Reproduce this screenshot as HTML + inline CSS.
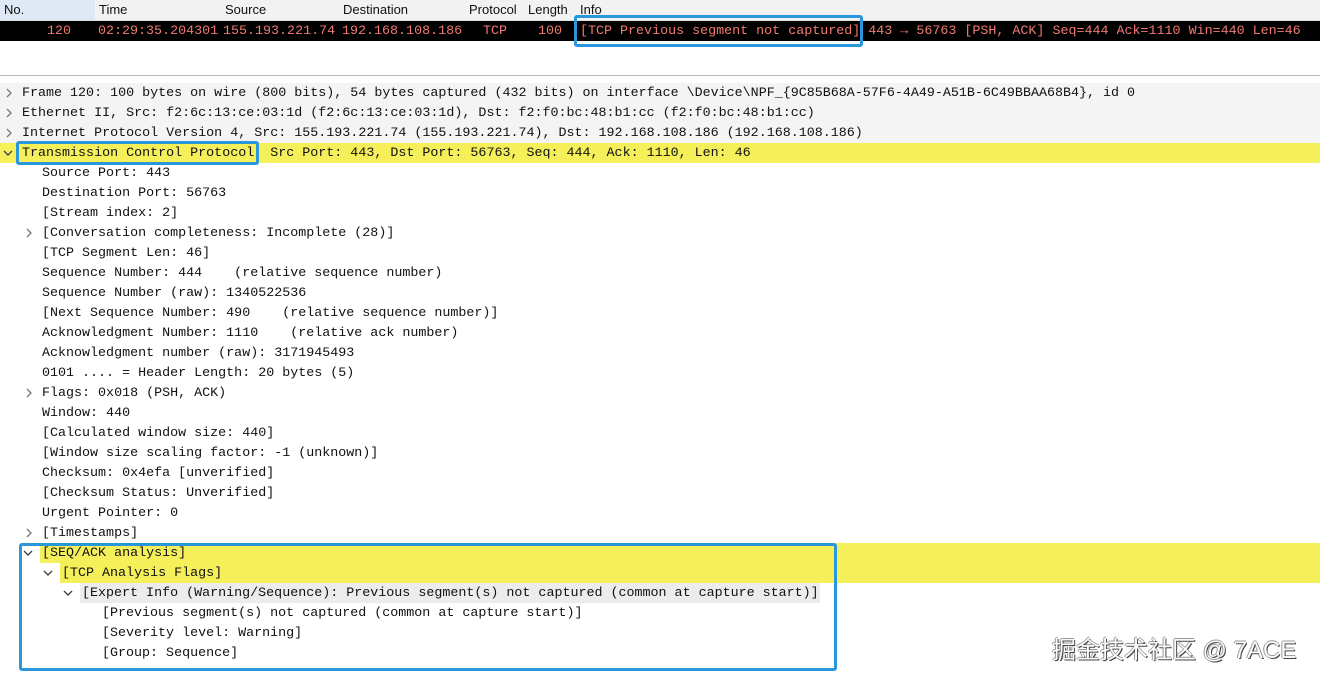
<!DOCTYPE html>
<html><head><style>
body{margin:0;width:1320px;height:680px;background:#fff;position:relative;overflow:hidden;font-family:"Liberation Mono",monospace;font-size:13.35px;color:#111}
.hdr{position:absolute;left:0;top:0;width:1320px;height:20px;background:#f2f2f2;border-bottom:1px solid #ddd;font-family:"Liberation Sans",sans-serif;font-size:13px}
.hdr span{position:absolute;top:2px}
.pk{position:absolute;left:0;top:21px;width:1320px;height:20px;background:#000;color:#f07a72}
.pk span{position:absolute;top:3px;white-space:pre}
.sep{position:absolute;left:0;top:75px;width:1320px;height:1px;background:#bbb}
.r{position:absolute;height:20px;line-height:22px;white-space:pre}
.bg{position:absolute;height:20px}
svg.a{position:absolute;width:10px;height:10px}
.box{position:absolute;border:3px solid #2a97dc;border-radius:3px;box-sizing:border-box}
.wm{position:absolute;left:1052px;top:630px;font-family:"Liberation Sans","Noto Sans CJK SC",sans-serif;font-size:24px;color:#fafafa;text-shadow:1px 1px 0 #444,-1px 0 0 #999,0 -1px 0 #999}
</style></head><body>
<div class="hdr"><span style="left:0;top:0;width:95px;height:20px;background:#dfe9f5"></span><span style="left:4px">No.</span><span style="left:99px">Time</span><span style="left:225px">Source</span><span style="left:343px">Destination</span><span style="left:469px">Protocol</span><span style="left:528px">Length</span><span style="left:580px">Info</span></div>
<div class="pk"><span style="left:47px">120</span><span style="left:98px">02:29:35.204301</span><span style="left:223px">155.193.221.74</span><span style="left:342px">192.168.108.186</span><span style="left:483px">TCP</span><span style="left:538px">100</span><span style="left:580px">[TCP Previous segment not captured] 443 → 56763 [PSH, ACK] Seq=444 Ack=1110 Win=440 Len=46</span></div>
<div class="sep"></div>
<div class="bg" style="left:0;top:83px;width:1320px;background:#f4f4f4"></div>
<div class="bg" style="left:0;top:103px;width:1320px;background:#f4f4f4"></div>
<div class="bg" style="left:0;top:123px;width:1320px;background:#f4f4f4"></div>
<div class="bg" style="left:0;top:143px;width:1320px;background:#f5f05a"></div>
<div class="bg" style="left:40px;top:543px;width:1280px;background:#f5f05a"></div>
<div class="bg" style="left:60px;top:563px;width:1260px;background:#f5f05a"></div>
<div class="bg" style="left:80px;top:583px;width:740px;background:#ececec"></div>
<svg width="0" height="0" style="position:absolute"><defs><polyline id="c" points="3,1 7,5 3,9" fill="none" stroke="#777" stroke-width="1.3"/><polyline id="d" points="1,3 5,7 9,3" fill="none" stroke="#444" stroke-width="1.4"/></defs></svg>
<svg class="a" style="left:4px;top:88px"><use href="#c"/></svg><div class="r" style="left:22px;top:83px">Frame 120: 100 bytes on wire (800 bits), 54 bytes captured (432 bits) on interface \Device\NPF_{9C85B68A-57F6-4A49-A51B-6C49BBAA68B4}, id 0</div>
<svg class="a" style="left:4px;top:108px"><use href="#c"/></svg><div class="r" style="left:22px;top:103px">Ethernet II, Src: f2:6c:13:ce:03:1d (f2:6c:13:ce:03:1d), Dst: f2:f0:bc:48:b1:cc (f2:f0:bc:48:b1:cc)</div>
<svg class="a" style="left:4px;top:128px"><use href="#c"/></svg><div class="r" style="left:22px;top:123px">Internet Protocol Version 4, Src: 155.193.221.74 (155.193.221.74), Dst: 192.168.108.186 (192.168.108.186)</div>
<svg class="a" style="left:3px;top:148px"><use href="#d"/></svg><div class="r" style="left:22px;top:143px">Transmission Control Protocol, Src Port: 443, Dst Port: 56763, Seq: 444, Ack: 1110, Len: 46</div>
<div class="r" style="left:42px;top:163px">Source Port: 443</div>
<div class="r" style="left:42px;top:183px">Destination Port: 56763</div>
<div class="r" style="left:42px;top:203px">[Stream index: 2]</div>
<svg class="a" style="left:24px;top:228px"><use href="#c"/></svg><div class="r" style="left:42px;top:223px">[Conversation completeness: Incomplete (28)]</div>
<div class="r" style="left:42px;top:243px">[TCP Segment Len: 46]</div>
<div class="r" style="left:42px;top:263px">Sequence Number: 444    (relative sequence number)</div>
<div class="r" style="left:42px;top:283px">Sequence Number (raw): 1340522536</div>
<div class="r" style="left:42px;top:303px">[Next Sequence Number: 490    (relative sequence number)]</div>
<div class="r" style="left:42px;top:323px">Acknowledgment Number: 1110    (relative ack number)</div>
<div class="r" style="left:42px;top:343px">Acknowledgment number (raw): 3171945493</div>
<div class="r" style="left:42px;top:363px">0101 .... = Header Length: 20 bytes (5)</div>
<svg class="a" style="left:24px;top:388px"><use href="#c"/></svg><div class="r" style="left:42px;top:383px">Flags: 0x018 (PSH, ACK)</div>
<div class="r" style="left:42px;top:403px">Window: 440</div>
<div class="r" style="left:42px;top:423px">[Calculated window size: 440]</div>
<div class="r" style="left:42px;top:443px">[Window size scaling factor: -1 (unknown)]</div>
<div class="r" style="left:42px;top:463px">Checksum: 0x4efa [unverified]</div>
<div class="r" style="left:42px;top:483px">[Checksum Status: Unverified]</div>
<div class="r" style="left:42px;top:503px">Urgent Pointer: 0</div>
<svg class="a" style="left:24px;top:528px"><use href="#c"/></svg><div class="r" style="left:42px;top:523px">[Timestamps]</div>
<svg class="a" style="left:23px;top:548px"><use href="#d"/></svg><div class="r" style="left:42px;top:543px">[SEQ/ACK analysis]</div>
<svg class="a" style="left:43px;top:568px"><use href="#d"/></svg><div class="r" style="left:62px;top:563px">[TCP Analysis Flags]</div>
<svg class="a" style="left:63px;top:588px"><use href="#d"/></svg><div class="r" style="left:82px;top:583px">[Expert Info (Warning/Sequence): Previous segment(s) not captured (common at capture start)]</div>
<div class="r" style="left:102px;top:603px">[Previous segment(s) not captured (common at capture start)]</div>
<div class="r" style="left:102px;top:623px">[Severity level: Warning]</div>
<div class="r" style="left:102px;top:643px">[Group: Sequence]</div>
<div class="box" style="left:574px;top:15px;width:289px;height:32px"></div>
<div class="box" style="left:16px;top:141px;width:243px;height:24px"></div>
<div class="box" style="left:19px;top:543px;width:818px;height:128px"></div>
<div class="wm">掘金技术社区 @ 7ACE</div>
</body></html>
